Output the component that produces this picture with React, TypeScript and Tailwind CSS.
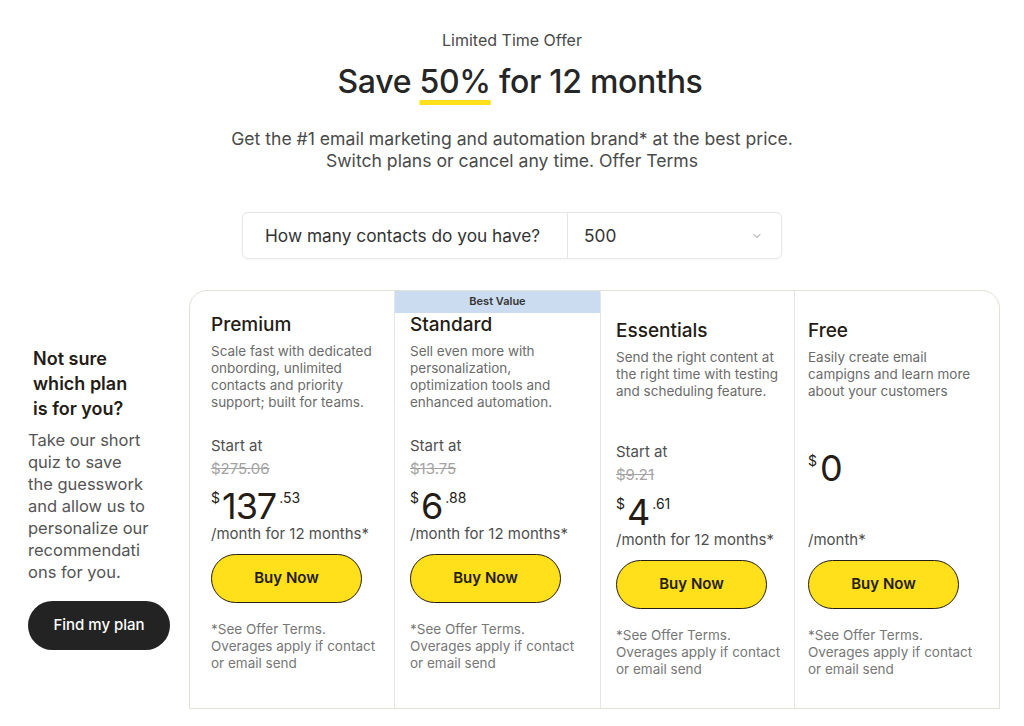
import { ChevronDown } from 'lucide-react';

type Plan = {
  name: string;
  desc: string[];
  old?: string;
  whole: string;
  cents?: string;
  per: string;
  best?: boolean;
  pad: string;
  border: boolean;
};

const plans: Plan[] = [
  {
    name: 'Premium',
    desc: ['Scale fast with dedicated', 'onbording, unlimited', 'contacts and priority', 'support; built for teams.'],
    old: '$275.06',
    whole: '137',
    cents: '.53',
    per: '/month for 12 months*',
    pad: 'pl-[21px] pt-[22px]',
    border: false,
  },
  {
    name: 'Standard',
    desc: ['Sell even more with', 'personalization,', 'optimization tools and', 'enhanced automation.'],
    old: '$13.75',
    whole: '6',
    cents: '.88',
    per: '/month for 12 months*',
    best: true,
    pad: 'pl-[15px] pt-0',
    border: true,
  },
  {
    name: 'Essentials',
    desc: ['Send the right content at', 'the right time with testing', 'and scheduling feature.'],
    old: '$9.21',
    whole: '4',
    cents: '.61',
    per: '/month for 12 months*',
    pad: 'pl-[15px] pt-[28px]',
    border: true,
  },
  {
    name: 'Free',
    desc: ['Easily create email', 'campigns and learn more', 'about your customers'],
    whole: '0',
    per: '/month*',
    pad: 'pl-[13px] pt-[28px]',
    border: true,
  },
];

function PlanColumn({ plan }: { plan: Plan }) {
  return (
    <div className={`flex flex-col pb-[30px] ${plan.border ? 'border-l border-[#e6e6e6]' : ''}`}>
      {plan.best && (
        <div className="h-[22px] bg-[#cbdcf0] text-center text-[11px] font-semibold leading-[21px] text-[#333]">
          Best Value
        </div>
      )}
      <div className={`flex flex-col ${plan.pad}`}>
        <h3 className="text-[19px] font-medium leading-6 text-[#241c15]">{plan.name}</h3>
        <p className="mt-[6px] h-[93px] text-[13.5px] leading-[17px] text-[#6b6b6b]">
          {plan.desc.map((l) => (
            <span key={l} className="block whitespace-nowrap">
              {l}
            </span>
          ))}
        </p>
        <div className="flex h-[108px] flex-col text-[#4f4f4f]">
          {plan.old ? (
            <>
              <div className="text-[15px] leading-5">Start at</div>
              <div className="mt-[3px] text-[15px] leading-5 text-[#a3a3a3] line-through">{plan.old}</div>
              <div className="mt-[9px] flex items-start text-[#241c15]">
                <span className="mt-[2px] mr-[2px] text-[14px] leading-4">$</span>
                <span className="text-[36px] leading-[36px] tracking-[-1px]">{plan.whole}</span>
                <span className="mt-[2px] ml-[3px] text-[14px] leading-4">{plan.cents}</span>
              </div>
            </>
          ) : (
            <div className="mt-2 flex items-start text-[#241c15]">
              <span className="mt-[3px] mr-[3px] text-[14px] leading-4">$</span>
              <span className="text-[36px] leading-[36px]">{plan.whole}</span>
            </div>
          )}
          <div className="mt-auto text-[15px] leading-5">{plan.per}</div>
        </div>
        <button className="mt-[10px] h-[49px] w-[151px] rounded-full border-[1.5px] border-[#241c15] bg-[#ffe01b] text-[15px] font-semibold text-[#241c15]">
          Buy Now
        </button>
        <p className="mt-[18px] text-[13.5px] leading-[17px] text-[#777]">
          <span className="block whitespace-nowrap">*See Offer Terms.</span>
          <span className="block whitespace-nowrap">Overages apply if contact</span>
          <span className="block whitespace-nowrap">or email send</span>
        </p>
      </div>
    </div>
  );
}

export default function App() {
  return (
    <div className="min-h-[726px] w-[1024px] bg-white font-['Inter',sans-serif] text-[#241c15]">
      <header className="flex flex-col items-center pt-[28px] text-center">
        <div className="text-[16px] leading-6 text-[#4a4a4a]">Limited Time Offer</div>
        <h1 className="mt-[10px] pl-[16px] text-[32px] font-medium leading-10 tracking-[-0.3px] text-[#262626]">
          Save{' '}
          <span className="underline decoration-[#ffe01b] decoration-[5px] underline-offset-[7px]">50%</span>{' '}
          for 12 months
        </h1>
        <p className="mt-[26px] text-[17.6px] leading-[22px] text-[#4a4a4a]">
          Get the #1 email marketing and automation brand* at the best price.
          <br />
          Switch plans or cancel any time. Offer Terms
        </p>
      </header>

      <div className="mx-auto mt-[40px] flex h-[47px] w-[540px] rounded-md border border-[#e6e6e6] shadow-[0_1px_3px_rgba(0,0,0,0.04)]">
        <div className="flex w-[325px] items-center border-r border-[#e6e6e6] pl-[22px] text-[17.3px] text-[#333]">
          How many contacts do you have?
        </div>
        <div className="flex flex-1 items-center justify-between pl-4 pr-[18px] text-[17.3px] text-[#333]">
          <span>500</span>
          <ChevronDown size={12} strokeWidth={1.5} className="text-[#666]" />
        </div>
      </div>

      <div className="mt-[31px] flex items-center pl-[28px] pr-[24px]">
        <aside className="-mt-1 w-[161px] shrink-0">
          <h2 className="pl-[5px] text-[18px] font-semibold leading-[25px] text-[#241c15]">
            Not sure
            <br />
            which plan
            <br />
            is for you?
          </h2>
          <p className="mt-[8px] text-[16.5px] leading-[22px] text-[#555]">
            Take our short
            <br />
            quiz to save
            <br />
            the guesswork
            <br />
            and allow us to
            <br />
            personalize our
            <br />
            recommendati
            <br />
            ons for you.
          </p>
          <button className="mt-[18px] h-[49px] w-[142px] rounded-full bg-[#232323] text-[15px] font-medium text-white">
            Find my plan
          </button>
        </aside>
        <div className="grid w-[811px] grid-cols-[204px_206px_194px_205px] overflow-hidden rounded-t-[18px] border border-[#e4e0d7]">
          {plans.map((p) => (
            <PlanColumn key={p.name} plan={p} />
          ))}
        </div>
      </div>
    </div>
  );
}
